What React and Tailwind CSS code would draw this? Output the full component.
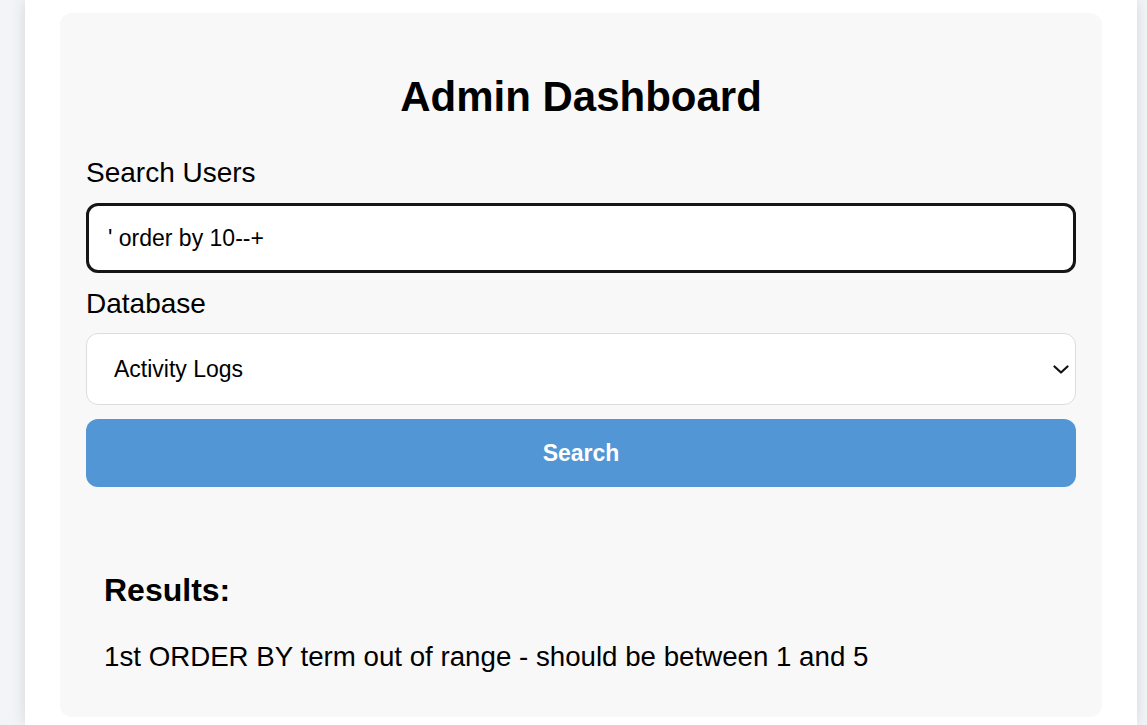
import React, { useState } from 'react';

const AdminDashboard = () => {
  const [query, setQuery] = useState("' order by 10--+");
  const [db, setDb] = useState('logs');

  const moveCaretToEnd = (e) => {
    const len = e.target.value.length;
    e.target.setSelectionRange(len, len);
  };

  return (
    <div className="min-h-screen bg-[#f3f4f8] pl-[25px] pr-[10px] font-['Liberation_Sans',Arial,sans-serif] text-black">
      <div className="min-h-[725px] bg-white px-[35px] pt-[13px] pb-[8px] shadow-[0_0_14px_rgba(0,0,0,0.12)]">
        <div className="rounded-xl bg-[#f8f8f8] px-[26px] pt-[60px] pb-[44px]">
          <h1 className="text-center text-[42px] font-bold leading-[48px]">Admin Dashboard</h1>

          <label className="mt-[36px] block text-[28px] leading-[32px]">Search Users</label>
          <input
            type="text"
            value={query}
            autoFocus
            onFocus={moveCaretToEnd}
            onChange={(e) => setQuery(e.target.value)}
            className="mt-[14px] block h-[70px] w-full rounded-xl border-[3px] border-[#151515] bg-white pl-[19px] text-[23px] text-black caret-black outline-none"
          />

          <label className="mt-[15px] block text-[28px] leading-[32px]">Database</label>
          <div className="relative mt-[13px]">
            <select
              value={db}
              onChange={(e) => setDb(e.target.value)}
              className="block h-[72px] w-full appearance-none rounded-xl border border-[#dddddd] bg-white pl-[27px] text-[23px] text-black outline-none"
            >
              <option value="users">Users</option>
              <option value="logs">Activity Logs</option>
              <option value="orders">Orders</option>
            </select>
            <svg
              className="pointer-events-none absolute right-[7px] top-[32px]"
              width="16"
              height="9"
              viewBox="0 0 16 9"
              fill="none"
            >
              <path d="M1.5 1.5 L8 7.5 L14.5 1.5" stroke="#111" strokeWidth="2.2" strokeLinecap="round" strokeLinejoin="round" />
            </svg>
          </div>

          <button className="mt-[14px] block h-[68px] w-full rounded-xl bg-[#5296d6] text-[23px] font-bold text-white">
            Search
          </button>

          <div className="mt-[85px] px-[18px]">
            <h3 className="text-[32px] font-bold leading-[37px]">Results:</h3>
            <p className="mt-[32px] text-[27.7px] leading-[32px]">
              1st ORDER BY term out of range - should be between 1 and 5
            </p>
          </div>
        </div>
      </div>
    </div>
  );
};

export default AdminDashboard;
